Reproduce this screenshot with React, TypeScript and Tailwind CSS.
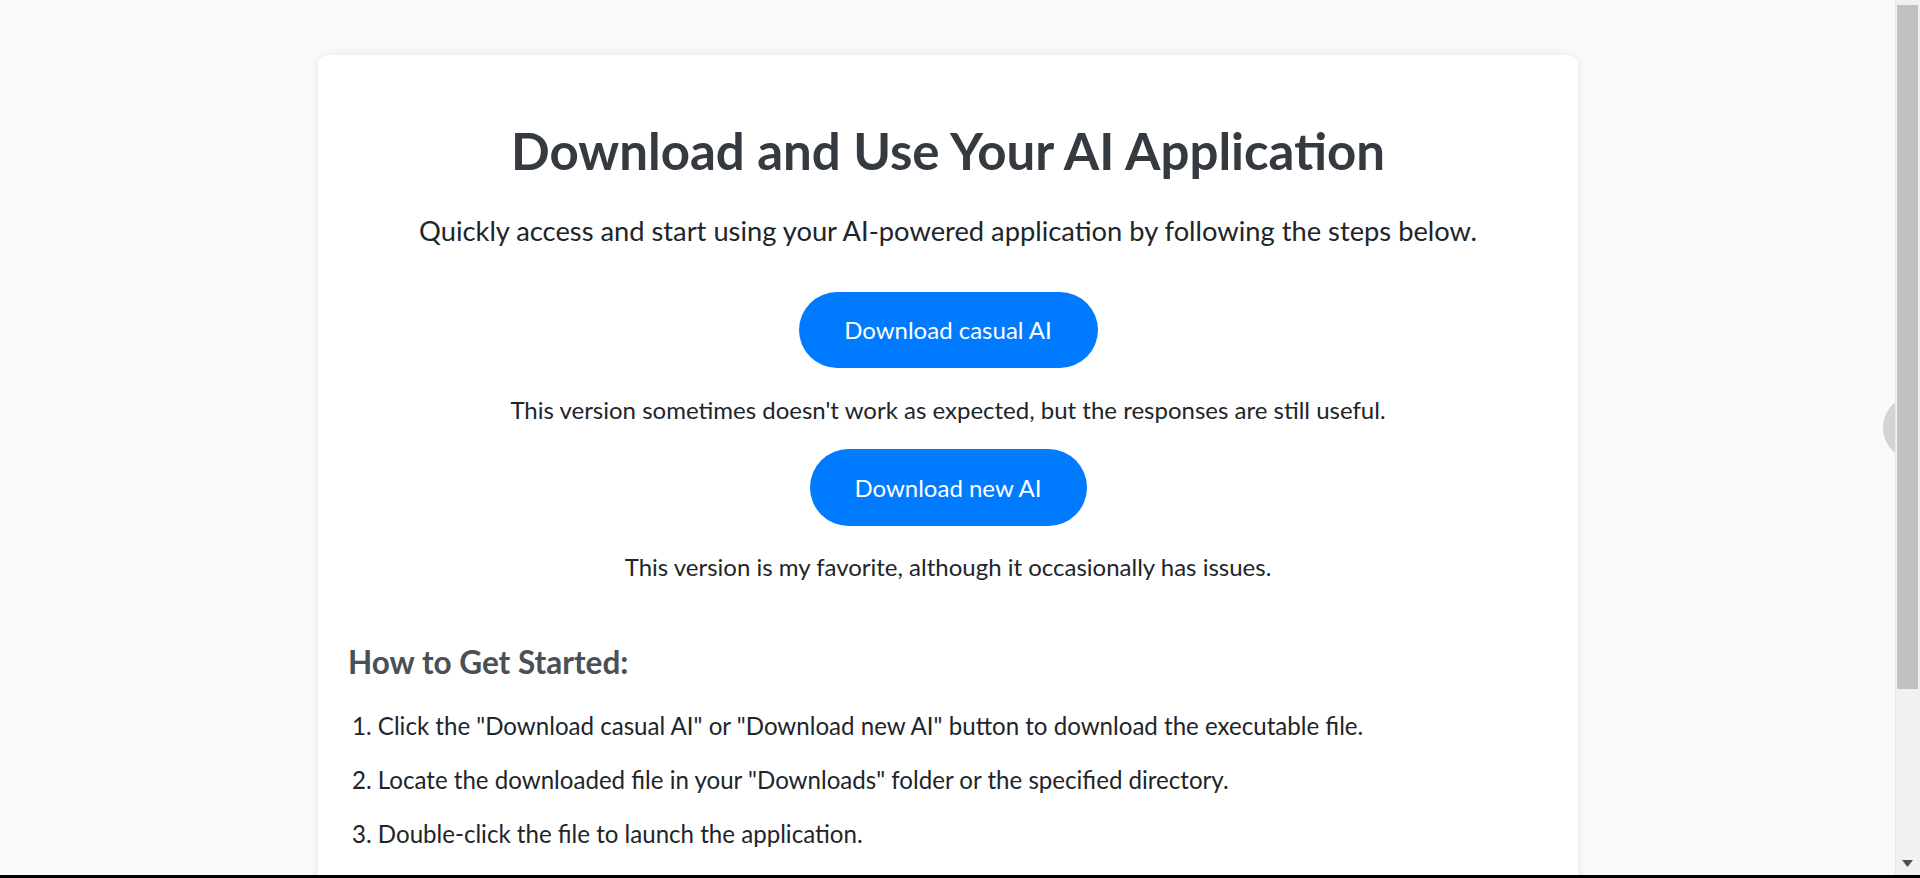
import React from "react";

export default function App() {
  const font = { fontFamily: "Lato, 'Open Sans', sans-serif" };
  return (
    <div className="relative flex h-[878px] w-[1920px] flex-col overflow-hidden bg-[#f8f9fa]" style={font}>
      <div className="flex h-[875px] w-full overflow-hidden">
        <div className="flex-1 overflow-hidden pl-[318px] pt-[55px]">
          <div className="w-[1260px] h-[900px] rounded-[10px] bg-white px-[30px] pt-[66px] shadow-[0_0_10px_rgba(0,0,0,0.08)]">
            <h1 className="text-center text-[51px] font-bold leading-[60px] text-[#343a40]">
              Download and Use Your AI Application
            </h1>
            <p className="mt-[32px] text-center text-[27.3px] leading-[36px] text-[#212529]">
              Quickly access and start using your AI-powered application by following the steps below.
            </p>
            <div className="mt-[43px] flex justify-center">
              <button className="flex h-[76px] w-[299px] items-center justify-center rounded-full bg-[#007bff] text-[24px] text-white">
                Download casual AI
              </button>
            </div>
            <p className="mt-[26px] text-center text-[24px] leading-[32px] text-[#212529]">
              This version sometimes doesn't work as expected, but the responses are still useful.
            </p>
            <div className="mt-[23px] flex justify-center">
              <button className="flex h-[77px] w-[277px] items-center justify-center rounded-full bg-[#007bff] text-[24px] text-white">
                Download new AI
              </button>
            </div>
            <p className="mt-[25px] text-center text-[24px] leading-[32px] text-[#212529]">
              This version is my favorite, although it occasionally has issues.
            </p>
            <h2 className="mt-[59px] text-[31.5px] font-bold leading-[40px] text-[#495057]">
              How to Get Started:
            </h2>
            <ol className="mt-[28px] flex flex-col gap-[22px] pl-[4px] text-[24.1px] leading-[32px] text-[#212529]">
              <li>1. Click the "Download casual AI" or "Download new AI" button to download the executable file.</li>
              <li>2. Locate the downloaded file in your "Downloads" folder or the specified directory.</li>
              <li>3. Double-click the file to launch the application.</li>
            </ol>
          </div>
        </div>
        <div className="relative z-10 flex h-full w-[25px] flex-col border-l border-[#e8e8e8] bg-[#f1f1f1] pl-[1px] pr-[2px]">
          <div className="mt-[5px] h-[684px] w-full bg-[#c1c1c1]" />
          <div className="flex-1" />
          <div className="mb-[8px] flex justify-center">
            <svg width="11" height="7" viewBox="0 0 11 7">
              <polygon points="0,0 11,0 5.5,7" fill="#505050" />
            </svg>
          </div>
        </div>
      </div>
      <div className="h-[3px] w-full bg-black" />
      <div className="absolute left-[1883px] top-[395px] h-[65px] w-[65px] rounded-full bg-[#d3d3d3]" />
    </div>
  );
}
